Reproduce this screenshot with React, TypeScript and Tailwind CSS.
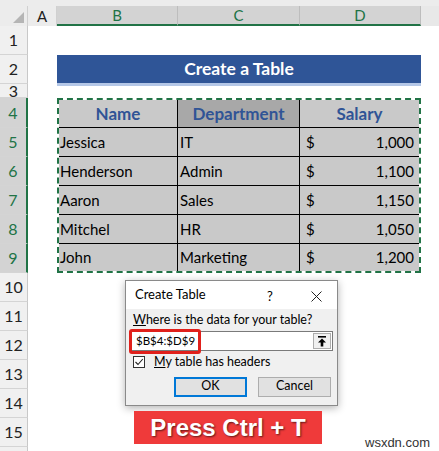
import React from "react";

const rowHeights = [29, 29, 14, 30, 29, 29, 29, 29, 29, 29, 29, 29, 29, 29, 29, 29];

const data = [
  ["Jessica", "IT", "1,000"],
  ["Henderson", "Admin", "1,100"],
  ["Aaron", "Sales", "1,150"],
  ["Mitchel", "HR", "1,050"],
  ["John", "Marketing", "1,200"],
];

const rowH = ["h-[29px]", "h-[29px]", "h-[29px]", "h-[29px]", "h-[27px]"];

export default function App() {
  return (
    <div
      className="relative w-[439px] h-[451px] overflow-hidden bg-white"
      style={{ fontFamily: "Lato, 'Liberation Sans', sans-serif" }}
    >
      {/* top strip */}
      <div className="h-[6px] bg-[#ececec]" />
      {/* column header */}
      <div className="flex h-[20px] text-[15px] leading-none">
        <div className="relative w-[28px] bg-[#ececec] border-r border-[#d0d0d0]">
          <div className="absolute right-[3px] bottom-[3px] w-0 h-0 border-l-[11px] border-l-transparent border-b-[11px] border-b-[#b5b5b5]" />
        </div>
        <div className="w-[29px] bg-[#ececec] border-r border-[#d0d0d0] flex items-center justify-center text-[#222]">A</div>
        <div className="w-[121px] bg-[#d3d3d3] border-r border-[#bdbdbd] border-b-2 border-b-[#217346] flex items-center justify-center text-[#217346]">B</div>
        <div className="w-[122px] bg-[#d3d3d3] border-r border-[#bdbdbd] border-b-2 border-b-[#217346] flex items-center justify-center text-[#217346]">C</div>
        <div className="w-[121px] bg-[#d3d3d3] border-r border-[#bdbdbd] border-b-2 border-b-[#217346] flex items-center justify-center text-[#217346]">D</div>
        <div className="flex-1 bg-[#e8e8e8]" />
      </div>

      <div className="flex">
        {/* row headers */}
        <div className="w-[28px] flex flex-col text-[16px]">
          {rowHeights.map((h, i) => {
            const sel = i >= 3 && i <= 8;
            return (
              <div
                key={i}
                style={{ height: h }}
                className={
                  "shrink-0 overflow-hidden flex items-center justify-center border-b border-[#d4d4d4] leading-none " +
                  (sel
                    ? "bg-[#d3d3d3] text-[#217346] border-r-2 border-r-[#217346]"
                    : "bg-[#f0f0f0] text-[#222] border-r border-r-[#c8c8c8]")
                }
              >
                {i < 15 ? i + 1 : ""}
              </div>
            );
          })}
        </div>

        {/* sheet content */}
        <div className="flex-1 pl-[29px]">
          <div className="mt-[29px] w-[364px] h-[31px] bg-[#2f5597] border-b-[3px] border-[#b4c7e7] flex items-center justify-center text-white font-bold text-[17.5px]">
            Create a Table
          </div>
          <div className="mt-[12px] w-[364px] bg-white border-2 border-dashed border-[#217346]">
            <div className="flex h-[28px] border-b border-black text-[17px] font-bold text-[#305496]">
              <div className="w-[119px] bg-[#c9c9c9] border-r border-black flex items-center justify-center">Name</div>
              <div className="w-[122px] bg-[#a8a8a8] border-r border-black flex items-center justify-center">Department</div>
              <div className="flex-1 bg-[#c9c9c9] flex items-center justify-center">Salary</div>
            </div>
            {data.map((r, i) => (
              <div
                key={i}
                className={
                  "flex bg-[#c9c9c9] text-[15px] text-black " +
                  rowH[i] +
                  (i < 4 ? " border-b border-black" : "")
                }
              >
                <div className="w-[119px] border-r border-black flex items-center pl-[1px]">{r[0]}</div>
                <div className="w-[122px] border-r border-black flex items-center pl-[2px]">{r[1]}</div>
                <div className="flex-1 flex items-center justify-between pl-[6px] pr-[5px]">
                  <span>$</span>
                  <span>{r[2]}</span>
                </div>
              </div>
            ))}
          </div>
        </div>
      </div>

      {/* dialog */}
      <div
        className="absolute left-[125px] top-[280px] w-[213px] h-[126px] bg-[#f0f0f0] border border-[#8a8a8a] shadow-[0_2px_8px_rgba(0,0,0,0.3)] text-[12px] text-black"
        style={{ fontFamily: "Lato, 'Noto Sans', sans-serif" }}
      >
        <div className="h-[28px] bg-white flex items-center pl-[9px] relative">
          <span className="text-[13px]">Create Table</span>
          <span className="absolute left-[141px] top-[6px] text-[13px]">?</span>
          <svg className="absolute left-[185px] top-[10px]" width="11" height="11" viewBox="0 0 11 11">
            <path d="M0.5 0.5 L10.5 10.5 M10.5 0.5 L0.5 10.5" stroke="#222" strokeWidth="1" />
          </svg>
        </div>
        <div className="pl-[7px] pt-[3px] leading-[16px] text-[12.5px]">
          <span className="underline">W</span>here is the data for your table?
        </div>
        <div className="relative ml-[4px] mt-[3px] w-[203px] h-[20px] bg-white border border-[#7a7a7a] flex items-center">
          <span className="pl-[5px] text-[11.5px]">$B$4:$D$9</span>
          <div className="absolute right-[1px] top-[1px] w-[18px] h-[16px] bg-[#f0f0f0] border border-[#adadad] flex items-center justify-center">
            <svg width="10" height="11" viewBox="0 0 10 11">
              <rect x="1" y="0" width="8" height="1.6" fill="#000" />
              <path d="M5 2.5 L9 6.5 L6.3 6.5 L6.3 10.5 L3.7 10.5 L3.7 6.5 L1 6.5 Z" fill="#000" />
            </svg>
          </div>
          <div className="absolute left-[-2px] top-[-3px] w-[72px] h-[25px] border-[3px] border-[#e0201b] rounded-[3px]" />
        </div>
        <div className="flex items-center mt-[5px] ml-[7px]">
          <div className="w-[12px] h-[12px] border border-[#333] bg-white flex items-center justify-center">
            <svg width="10" height="10" viewBox="0 0 10 10">
              <path d="M1.5 5 L4 7.5 L8.8 2" stroke="#222" strokeWidth="1.1" fill="none" />
            </svg>
          </div>
          <span className="ml-[9px] leading-none text-[12.5px]">
            <span className="underline">M</span>y table has headers
          </span>
        </div>
        <div className="flex mt-[8px] ml-[48px] gap-[11px] text-[12.5px]">
          <div className="w-[73px] h-[20px] bg-[#e1e1e1] border-2 border-[#0078d7] flex items-center justify-center">OK</div>
          <div className="w-[73px] h-[20px] bg-[#e1e1e1] border border-[#adadad] flex items-center justify-center">Cancel</div>
        </div>
      </div>

      {/* red banner */}
      <div
        className="absolute left-[134px] top-[411px] w-[188px] h-[33px] bg-[#ef3a3a] flex items-center justify-center text-white font-bold text-[24px]"
        style={{ fontFamily: "'Liberation Sans', Arial, sans-serif", textShadow: "1px 1px 2px rgba(0,0,0,0.6)" }}
      >
        Press Ctrl + T
      </div>

      {/* watermark */}
      <div
        className="absolute left-[365px] top-[433px] text-[13px] text-[#333]"
        style={{ fontFamily: "'Liberation Sans', Arial, sans-serif" }}
      >
        wsxdn.com
      </div>
    </div>
  );
}
